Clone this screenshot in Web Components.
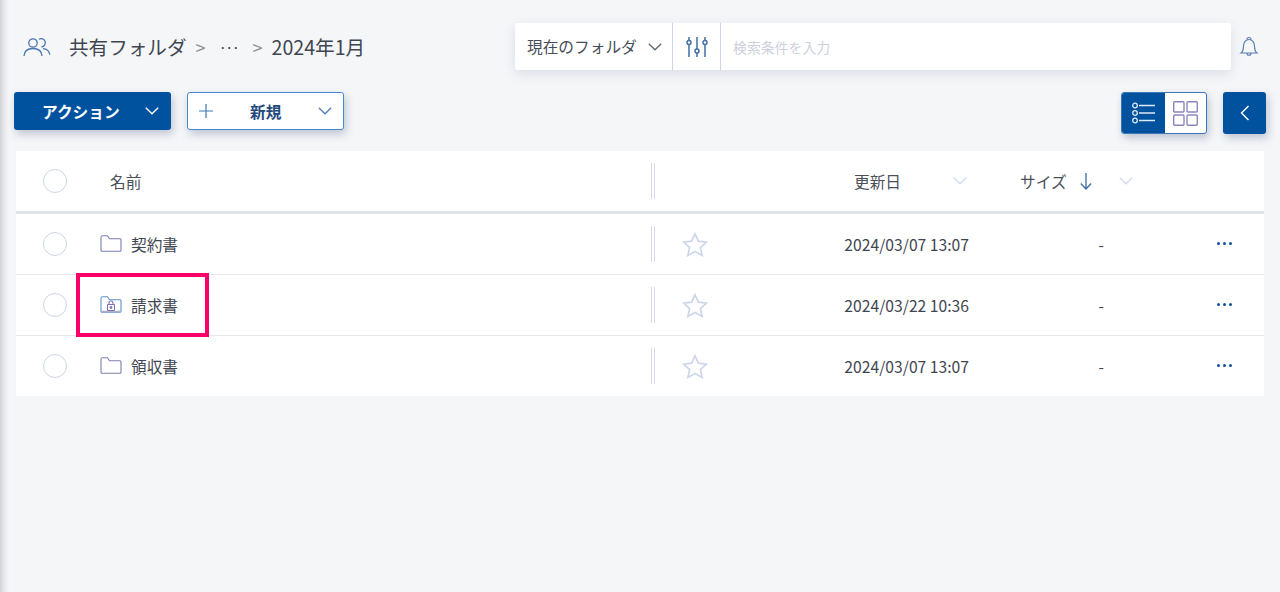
<!DOCTYPE html>
<html lang="ja">
<head>
<meta charset="utf-8">
<title>共有フォルダ</title>
<style>
html, body { margin: 0; height: 100%; }
body { background: #f5f6f8; font-family: "Noto Sans CJK JP", "Noto Sans", sans-serif; color: #3a4250; overflow: hidden; }
</style>
</head>
<body>
<app-page>
  <top-bar></top-bar>
  <action-bar></action-bar>
  <file-table>
    <file-row name="契約書" date="2024/03/07 13:07"></file-row>
    <file-row name="請求書" date="2024/03/22 10:36" locked></file-row>
    <file-row name="領収書" date="2024/03/07 13:07"></file-row>
  </file-table>
</app-page>

<script>
"use strict";

const chevron = (color, w = 14) => `<svg width="${w}" height="8" viewBox="0 0 14 8" fill="none" stroke="${color}" stroke-width="1.3"><path d="M.8.8 7 6.8 13.2.8"/></svg>`;

/* page shell */
class AppPage extends HTMLElement {
  constructor() {
    super();
    this.attachShadow({ mode: 'open' });
    this.shadowRoot.innerHTML = `
    <style>
      :host { display: flex; flex-direction: column; height: 592px; position: relative; box-sizing: border-box; padding: 23px 14px 0 14px; }
      .edge { position: absolute; left: 0; top: 0; bottom: 0; width: 9px; background: linear-gradient(to right, #d2d3d6, #e6e7ea 45%, #f5f6f8); }
    </style>
    <div class="edge"></div>
    <slot></slot>`;
  }
}

/* breadcrumb + search */
class TopBar extends HTMLElement {
  constructor() {
    super();
    this.attachShadow({ mode: 'open' });
    this.shadowRoot.innerHTML = `
    <style>
      :host { display: flex; align-items: center; height: 47px; font-size: 19.6px; }
      .crumbs { display: flex; align-items: center; width: 501px; padding-left: 8px; box-sizing: border-box; white-space: nowrap; color: #3f4651; }
      .crumbs svg { margin-right: 17px; }
      .sep { color: #8a8f98; font-size: 18px; }
      .dots { width: 18px; color: #3f4651; font-weight: 700; font-size: 11px; text-align: center; margin: 0 15px 0 14px; }
      .s1 { margin-left: 9px; }
      .s2 { margin-right: 9px; }
      .search { display: flex; width: 716px; height: 47px; background: #fff; border-radius: 2px; box-shadow: 0 4px 12px rgba(60,80,130,.14); font-size: 15.7px; }
      .scope { display: flex; align-items: center; width: 158px; box-sizing: border-box; padding-left: 12px; gap: 11px; border-right: 1px solid #ccd3e6; color: #464d58; white-space: nowrap; }
      .filter { display: flex; align-items: center; justify-content: center; width: 47px; border-right: 1px solid #ccd3e6; }
      .hint { display: flex; align-items: center; padding-left: 12px; font-size: 13.9px; color: #cdd1dc; }
      .bell { margin-left: 8px; }
    </style>
    <div class="crumbs">
      <svg width="30" height="22" viewBox="0 0 30 22" fill="none" stroke="#4a76ad" stroke-width="1.3">
        <circle cx="11" cy="7" r="4.2"/><path d="M2 20c.3-5 4-7.500 9-7.500s8.700 2.500 9 7.500"/>
        <path d="M17 3.200a4.200 4.200 0 1 1 2.500 7.800M21 12.600c3.800.3 6.300 2.600 6.800 6"/>
      </svg>
      <span>共有フォルダ</span><span class="sep s1">&gt;</span><span class="dots">···</span><span class="sep s2">&gt;</span><span>2024年1月</span>
    </div>
    <div class="search">
      <div class="scope"><span>現在のフォルダ</span>${chevron('#5a6472')}</div>
      <div class="filter">
        <svg width="22" height="22" viewBox="0 0 22 22" fill="none" stroke="#3f6ea8" stroke-width="1.500">
          <path d="M3 1v3.500M3 8.500V21M11 1v12M11 17v4M19 1v3.500M19 8.500V21"/>
          <circle cx="3" cy="6.500" r="2"/><circle cx="11" cy="15" r="2"/><circle cx="19" cy="6.500" r="2"/>
        </svg>
      </div>
      <div class="hint">検索条件を入力</div>
    </div>
    <svg class="bell" width="20" height="22" viewBox="0 0 20 22" fill="none" stroke="#5b7fb0" stroke-width="1.200">
      <path d="M2 17c2-1.500 2.500-3.500 2.500-7 0-3.500 2.200-6.500 5.500-6.500s5.500 3 5.500 6.500c0 3.500.5 5.500 2.500 7z"/>
      <path d="M8 3.500C8 2 9 1.500 10 1.500s2 .5 2 2M8 17c0 3 4 3 4 0"/>
    </svg>`;
  }
}

/* action buttons and view switch */
class ActionBar extends HTMLElement {
  constructor() {
    super();
    this.attachShadow({ mode: 'open' });
    this.shadowRoot.innerHTML = `
    <style>
      :host { display: flex; align-items: flex-start; margin-top: 22px; height: 59px; font-size: 15.7px; font-weight: 700; }
      .btn { display: flex; align-items: center; box-sizing: border-box; width: 157px; height: 38px; border-radius: 3px; box-shadow: 2px 4px 8px rgba(50,70,110,.28); }
      .action { background: #00529f; color: #fff; padding: 0 12px 0 28px; justify-content: space-between; }
      .new { background: #fff; border: 1px solid #4488d0; color: #234a7c; margin-left: 16px; padding: 0 11px 0 11px; }
      .new span { margin: 0 auto 0 37px; }
      .spacer { flex: 1; }
      .switch { display: flex; box-sizing: border-box; width: 86px; height: 42px; border-radius: 3px; border: 1px solid #3a78b8; background: #fff; overflow: hidden; box-shadow: 2px 4px 8px rgba(50,70,110,.28); }
      .switch div { flex: 1; display: flex; align-items: center; justify-content: center; }
      .switch .on { background: #00529f; flex: 0 0 43px; }
      .back { display: flex; align-items: center; justify-content: center; width: 43px; height: 42px; border-radius: 3px; background: #00529f; margin-left: 16px; box-shadow: 2px 4px 8px rgba(50,70,110,.28); }
    </style>
    <div class="btn action"><span>アクション</span>${chevron('#fff')}</div>
    <div class="btn new">
      <svg width="14" height="14" viewBox="0 0 14 14" stroke="#3f78b8" stroke-width="1.200"><path d="M7 0v14M0 7h14"/></svg>
      <span>新規</span>${chevron('#4f7fb5')}
    </div>
    <div class="spacer"></div>
    <div class="switch">
      <div class="on">
        <svg width="24" height="22" viewBox="0 0 24 22" fill="none" stroke="#dfe8f5" stroke-width="1.300">
          <circle cx="3" cy="3.500" r="2.300"/><circle cx="3" cy="11" r="2.300"/><circle cx="3" cy="18.500" r="2.300"/>
          <path d="M7 3.500h16M7 11h16M7 18.500h16"/>
        </svg>
      </div>
      <div>
        <svg width="25" height="25" viewBox="0 0 25 25" fill="none" stroke="#8a86bd" stroke-width="1.400">
          <rect x=".7" y=".7" width="10.300" height="10.300" rx="1"/><rect x="14" y=".7" width="10.300" height="10.300" rx="1"/>
          <rect x=".7" y="14" width="10.300" height="10.300" rx="1"/><rect x="14" y="14" width="10.300" height="10.300" rx="1"/>
        </svg>
      </div>
    </div>
    <div class="back"><svg width="10" height="16" viewBox="0 0 10 16" fill="none" stroke="#fff" stroke-width="1.400"><path d="M8.500 1 1.500 8l7 7"/></svg></div>`;
  }
}

/* table: header row + slotted rows */
class FileTable extends HTMLElement {
  constructor() {
    super();
    this.attachShadow({ mode: 'open' });
    this.shadowRoot.innerHTML = `
    <style>
      :host { display: block; margin: 0 2px; background: #fff; }
      .head { display: grid; grid-template-columns: 84px 552px 202px 166px 1fr; align-items: center; height: 60px; border-bottom: 3px solid #e0e3e8; font-size: 15.7px; color: #4a505a; }
      .check { box-sizing: border-box; width: 24px; height: 24px; border: 1.500px solid #cdd4e4; border-radius: 50%; margin-left: 27px; }
      .name { padding-left: 10px; }
      .rule { display: block; width: 2px; height: 36px; margin-left: -1px; border-left: 1px solid #d3d8ea; border-right: 1px solid #d3d8ea; }
      .col { display: flex; align-items: center; white-space: nowrap; }
      .date span { margin-right: 52px; }
      .arrow { margin: 0 27px 0 13px; }
    </style>
    <div class="head">
      <div class="check"></div>
      <div class="name">名前</div>
      <i class="rule"></i>
      <div class="col date"><span>更新日</span>${chevron('#cfdbee')}</div>
      <div class="col size"><span>サイズ</span>
        <svg class="arrow" width="12" height="18" viewBox="0 0 12 18" fill="none" stroke="#3f6ea8" stroke-width="1.300"><path d="M6 1v16M.8 11.500 6 17l5.200-5.500"/></svg>
        ${chevron('#cfdbee')}
      </div>
    </div>
    <slot></slot>`;
  }
}

/* one folder line */
class FileRow extends HTMLElement {
  constructor() {
    super();
    this.attachShadow({ mode: 'open' });
  }

  connectedCallback() {
    const name = this.getAttribute('name') || '';
    const date = this.getAttribute('date') || '';
    const locked = this.hasAttribute('locked');
    const folder = locked
      ? `<svg width="22" height="18" viewBox="0 0 22 18" fill="none" stroke="#5d93cf" stroke-width="1.100">
           <path d="M1 2.500C1 1.300 1.700.8 2.700.8h4.800l2 3H20c.7 0 1 .4 1 1v10.500c0 .7-.4 1-1 1H2c-.7 0-1-.4-1-1z"/>
           <path d="M1.500 15.500h19" stroke="#a9b4c8" stroke-width="1.500"/>
           <rect x="7.500" y="8.500" width="7" height="6" rx=".8" stroke="#7d6fb0"/><path d="M9 8.500V7a2 2 0 0 1 4 0v1.500" stroke="#7d6fb0"/><circle cx="11" cy="11.500" r=".9" stroke="#7d6fb0"/>
         </svg>`
      : `<svg width="22" height="18" viewBox="0 0 22 18" fill="none" stroke="#7a7fb0" stroke-width="1.100">
           <path d="M1 2.500C1 1.300 1.700.8 2.700.8h4.800l2 3H20c.7 0 1 .4 1 1v10.500c0 .7-.4 1-1 1H2c-.7 0-1-.4-1-1z"/>
         </svg>`;

    this.shadowRoot.innerHTML = `
    <style>
      :host { display: grid; grid-template-columns: 84px 552px 30px 40px 247px 135px 1fr; align-items: center; height: 60px; border-bottom: 1px solid #e6e8ec; font-size: 15.7px; color: #3f4651; position: relative; }
      :host(:last-child) { border-bottom: 0; }
      .check { box-sizing: border-box; width: 24px; height: 24px; border: 1.500px solid #cdd4e4; border-radius: 50%; margin-left: 27px; }
      .name { display: flex; align-items: center; gap: 9px; }
      .rule { width: 2px; height: 36px; margin-left: -1px; border-left: 1px solid #d3d8ea; border-right: 1px solid #d3d8ea; }
      .date, .size { text-align: right; white-space: nowrap; }
      .menu { display: flex; gap: 3px; padding-left: 113px; margin-top: -2px; }
      .menu i { width: 3px; height: 3px; border-radius: 50%; background: #0f4f9c; }
      .mark { position: absolute; left: 60px; top: -2px; width: 133px; height: 64px; box-sizing: border-box; border: 4px solid #fa0068; pointer-events: none; }
    </style>
    <div class="check"></div>
    <div class="name">${folder}<span>${name}</span></div>
    <i class="rule"></i>
    <svg width="26" height="25" viewBox="0 0 26 25" fill="none" stroke="#cdd6e8" stroke-width="1.700"><path d="M13 1.800l3.400 7.400 8 .9-6 5.400 1.700 7.900L13 19.500 5.900 23.400l1.700-7.900-6-5.400 8-.9z"/></svg>
    <div class="date">${date}</div>
    <div class="size">-</div>
    <div class="menu"><i></i><i></i><i></i></div>
    ${locked ? '<div class="mark"></div>' : ''}`;
  }
}

customElements.define('app-page', AppPage);
customElements.define('top-bar', TopBar);
customElements.define('action-bar', ActionBar);
customElements.define('file-table', FileTable);
customElements.define('file-row', FileRow);
</script>
</body>
</html>
